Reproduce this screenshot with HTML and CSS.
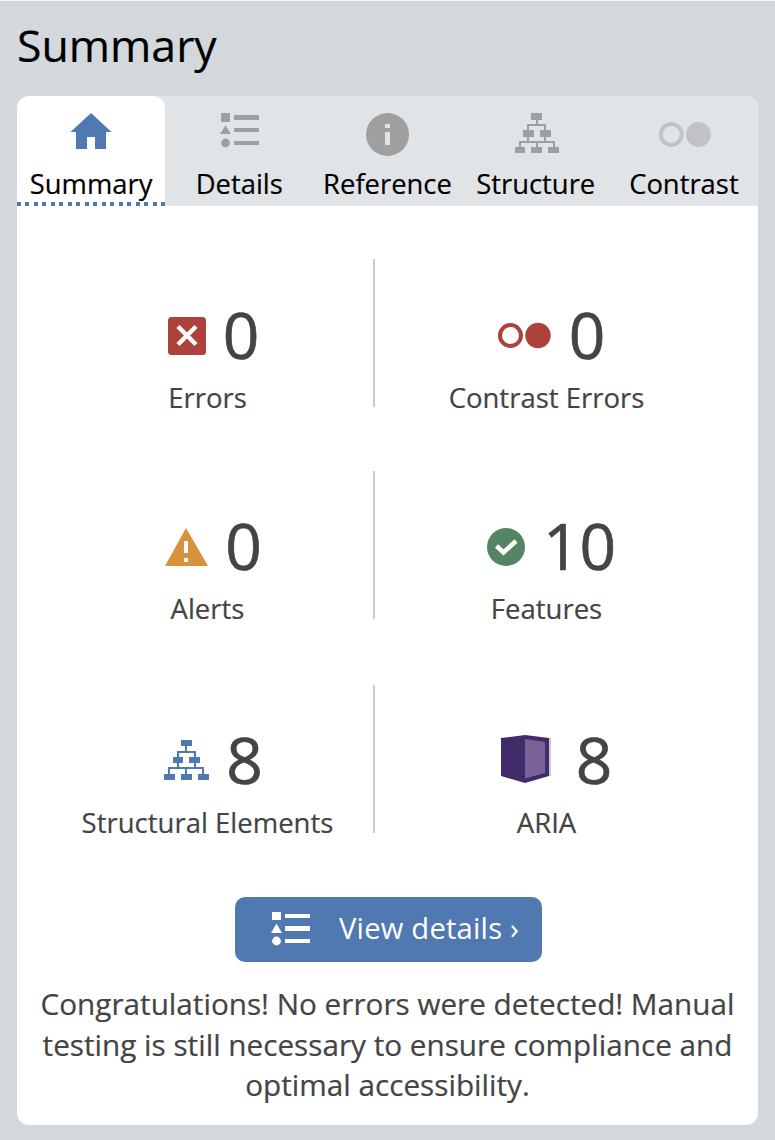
FILE: index.html
```html
<!DOCTYPE html>
<html lang="en">
<head>
<meta charset="utf-8">
<title>Summary</title>
<link rel="stylesheet" href="styles.css">
</head>
<body>
<main class="sidebar">
  <h1 class="title">Summary</h1>
  <section class="panel">
    <nav class="tabs">
      <a class="tab active">
        <span class="tab-icon"><svg width="148" height="68"><path fill="#5078b1" d="M74 17 94.500 36H89V53H78V41H70V53H59V36H53.500Z"/></svg></span>
        <span class="tab-label">Summary</span>
      </a>
      <a class="tab">
        <span class="tab-icon"><svg width="148" height="68" fill="#9e9fa1"><path d="M56 17h9v9h-9zM60.500 29.500 66 38H55zM69 19h25v5H69zM69 32h25v4H69zM69 45h25v4H69z"/><circle cx="60.500" cy="47" r="4.400"/></svg></span>
        <span class="tab-label">Details</span>
      </a>
      <a class="tab">
        <span class="tab-icon"><svg width="148" height="68"><circle cx="74.500" cy="38.500" r="21.500" fill="#9e9fa1"/><path fill="#e0e4e7" d="M72 28h5v4h-5zM72 36h5v13h-5z"/></svg></span>
        <span class="tab-label">Reference</span>
      </a>
      <a class="tab">
        <span class="tab-icon"><svg width="148" height="68"><path fill="#9e9fa1" d="M69 17h11v7H69zM61 34h11v7H61zM78 34h11v7H78zM53 51h10v6H53zM69 51h11v6H69zM86 51h11v6H86z"/><path fill="none" stroke="#9e9fa1" stroke-width="2" d="M75 24v5M66 34v-5h17v5M66 41v5M83 41v5M58 51v-5h34v5M75 46v5"/></svg></span>
        <span class="tab-label">Structure</span>
      </a>
      <a class="tab">
        <span class="tab-icon"><svg width="148" height="68"><circle cx="61.300" cy="38.500" r="10.500" fill="none" stroke="#c1c2c5" stroke-width="4"/><circle cx="88.500" cy="38.500" r="12.500" fill="#c1c2c5"/></svg></span>
        <span class="tab-label">Contrast</span>
      </a>
    </nav>
    <div class="stats">
      <div class="stat">
        <div class="figure"><svg width="38" height="38"><rect width="38" height="38" rx="3.500" fill="#ad423c"/><path d="m10 9.500 18 18m0-18-18 18" stroke="#fff" stroke-width="4.500" fill="none"/></svg><span class="count">0</span></div>
        <div class="label">Errors</div>
      </div>
      <div class="stat">
        <div class="figure"><svg width="53" height="38"><circle cx="12.500" cy="18.500" r="10.500" fill="none" stroke="#ad423c" stroke-width="4"/><circle cx="40" cy="18.500" r="12.700" fill="#ad423c"/></svg><span class="count">0</span></div>
        <div class="label">Contrast Errors</div>
      </div>
      <div class="stat">
        <div class="figure"><svg width="43" height="38"><path fill="#d8923b" d="M21 0 43 38H0z"/><path fill="#fff" d="M19 13h4v12h-4zM19 30h4v4h-4z"/></svg><span class="count">0</span></div>
        <div class="label">Alerts</div>
      </div>
      <div class="stat">
        <div class="figure"><svg width="38" height="38"><circle cx="19" cy="19" r="19" fill="#558465"/><path d="m9.500 18 7 6.500L29 13" fill="none" stroke="#fff" stroke-width="4.500"/></svg><span class="count">10</span></div>
        <div class="label">Features</div>
      </div>
      <div class="stat">
        <div class="figure"><svg width="45" height="42"><path fill="#5078b1" d="M17 0h11v6H17zM9 17h10v6H9zM25 17h11v6H25zM0 34h11v6H0zM17 34h11v6H17zM34 34h11v6H34z"/><path fill="none" stroke="#5078b1" stroke-width="2" d="M22 6v6M14 17v-5h17v5M14 23v5M31 23v5M5 34v-6h34v6M22 28v6"/></svg><span class="count">8</span></div>
        <div class="label">Structural Elements</div>
      </div>
      <div class="stat">
        <div class="figure"><svg width="67" height="52"><path fill="#d0c6dc" d="M58 3h2v38h-2z"/><path fill="#412b69" d="M10 3 34 0 58 3V41L34 48 10 41z"/><path fill="#7a6198" d="M34 4 54 7V38L34 43.500z"/></svg><span class="count">8</span></div>
        <div class="label">ARIA</div>
      </div>
    </div>
    <button class="view"><svg width="39" height="34" fill="#fff"><path d="M1 0h9v8H1zM5.500 11.500 11 21H0zM14 2h25v4H14zM14 14h25v5H14zM14 27h25v4H14z"/><circle cx="5.500" cy="29" r="4.400"/></svg><span>View details ›</span></button>
    <p class="message">Congratulations! No errors were detected! Manual<br>testing is still necessary to ensure compliance and<br>optimal accessibility.</p>
  </section>
</main>
</body>
</html>
```
FILE: styles.css
```css
* { box-sizing: border-box; }
body { margin: 0; background: #d3d8dc; font-family: "Open Sans", sans-serif; color: #444; -webkit-text-stroke: .2px; }
svg { display: block; flex: none; }
.sidebar { height: 1140px; padding: 0 17px; border-top: 1px solid #f5f6f7; overflow: hidden; }
.title { margin: 0; height: 95px; padding-top: 12px; font-size: 44.600px; line-height: 64px; font-weight: 400; color: #000; }
.panel { width: 741px; height: 1029px; background: #fff; border-radius: 12px; overflow: hidden; }
.tabs { display: grid; grid-template-columns: repeat(5, 1fr); height: 110px; background: #e0e4e7; }
.tab { display: flex; flex-direction: column; align-items: center; color: #000; font-size: 27.400px; line-height: 40px; white-space: nowrap; }
.tab.active {
  background: repeating-linear-gradient(90deg, #5078b1 0 4px, #fff 4px 8.470px) 0 100% / 100% 4px no-repeat #fff;
  border-radius: 12px 12px 0 0;
}
.tab-icon { height: 68px; }
.stats { display: grid; grid-template-columns: 333px 343px; grid-template-rows: 149px 151px 149px; row-gap: 63px; align-items: start; padding: 53px 0 0 25px; }
.stat { display: flex; flex-direction: column; align-items: center; height: 148px; }
.stat:nth-child(odd) { border-right: 2px solid #ccc; }
.figure { display: flex; align-items: center; gap: 18px; height: 88px; margin-top: 33px; padding-left: 10px; }
.stat:nth-child(odd) .figure { padding-left: 12px; gap: 17px; }
.stat:nth-child(n+3) .figure { margin-top: 32px; }
.count { font-size: 64px; line-height: 88px; padding-bottom: 2px; -webkit-text-stroke: .7px; }
.label { font-size: 27.500px; line-height: 38px; margin-top: -1px; white-space: nowrap; }
.view { display: flex; align-items: center; width: 307px; height: 65px; margin: 63px auto 0 218px; padding: 0 0 2px 36px; gap: 29px; border: 0; border-radius: 10px; background: #5078b1; color: #fff; font: 400 29.200px/38px "Open Sans", sans-serif; letter-spacing: .2px; white-space: nowrap; -webkit-text-stroke: 0; }
.view span { padding-bottom: 1px; }
.message { margin: 22px 0 0; text-align: center; font-size: 29.700px; line-height: 40.500px; white-space: nowrap; }
```
